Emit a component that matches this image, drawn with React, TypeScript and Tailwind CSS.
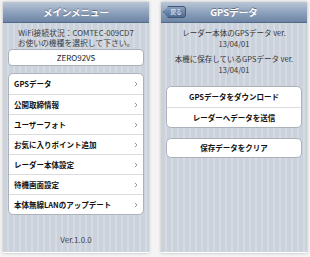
import React from 'react';

const stripes =
  'bg-[repeating-linear-gradient(90deg,#cbd2dc_0px,#cbd2dc_4px,#d5dbe3_4px,#d5dbe3_6px)]';

const menuItems = [
  'GPSデータ',
  '公開取締情報',
  'ユーザーフォト',
  'お気に入りポイント追加',
  'レーダー本体設定',
  '待機画面設定',
  '本体無線LANのアップデート',
];

const NavBar: React.FC<{ title: string; back?: boolean }> = ({ title, back }) => (
  <div className="relative h-[21px] shrink-0 flex items-center justify-center bg-gradient-to-b from-[#bac6d6] via-[#8fa3be] to-[#6d85a5] border-b border-[#53698a]">
    {back && (
      <div className="absolute left-[2px] top-[4px] h-[12px] w-[23px] flex items-center justify-center pl-[3px] text-[5.5px] text-white bg-gradient-to-b from-[#8ba0bd] to-[#4e6a93] border border-[#3f5677] rounded-[3px] [clip-path:polygon(5px_0,100%_0,100%_100%,5px_100%,0_50%)]">
        戻る
      </div>
    )}
    <span className="text-[9.5px] font-bold text-white [text-shadow:0_-1px_0_rgba(0,0,0,0.35)]">{title}</span>
  </div>
);

const Chevron = () => (
  <svg width="4" height="6" viewBox="0 0 4 6" className="shrink-0">
    <path d="M0.8 0.8 L3 3 L0.8 5.2" fill="none" stroke="#9a9a9a" strokeWidth="1" />
  </svg>
);

export default function App() {
  return (
    <div
      className="w-[310px] h-[257px] bg-[#f4f4f4] flex gap-[12px] pl-[3px] pt-[2px] overflow-hidden"
      style={{ fontFamily: '"Noto Sans CJK JP", "Noto Sans", sans-serif' }}
    >
      {/* Left screen */}
      <div className={`w-[146px] h-[251px] flex flex-col shadow-[0_0_3px_rgba(0,0,0,0.25)] border-b border-white ${stripes}`}>
        <NavBar title="メインメニュー" />
        <div className="flex-1 flex flex-col px-[5px]">
          <div className="pt-[5px] text-center text-[7.8px] leading-[10px] text-[#3d3d3d] whitespace-nowrap">
            <div>WiFi接続状況：COMTEC-009CD7</div>
            <div>お使いの機種を選択して下さい。</div>
          </div>
          <div className="mt-[1px] h-[17px] bg-white border border-[#aab0b8] rounded-[4px] flex items-center justify-center text-[8px] text-[#222]">
            ZERO92VS
          </div>
          <div className="mt-[7px] bg-white border border-[#acb2ba] rounded-[5px] overflow-hidden">
            {menuItems.map((item, i) => (
              <div
                key={item}
                className={`h-[20px] flex items-center justify-between pl-[5px] pr-[5px] ${i > 0 ? 'border-t border-[#dcdcdc]' : ''}`}
              >
                <span className="text-[7.5px] font-bold text-[#111]">{item}</span>
                <Chevron />
              </div>
            ))}
          </div>
          <div className="mt-auto pb-[6px] text-center text-[8px] text-[#444]">Ver.1.0.0</div>
        </div>
      </div>

      {/* Right screen */}
      <div className={`w-[146px] h-[251px] flex flex-col shadow-[0_0_3px_rgba(0,0,0,0.25)] border-b border-white ${stripes}`}>
        <NavBar title="GPSデータ" back />
        <div className="flex-1 flex flex-col px-[5px]">
          <div className="pt-[4px] text-center text-[7.5px] leading-[11px] text-[#333] whitespace-nowrap">
            <div>レーダー本体のGPSデータ ver.</div>
            <div>13/04/01</div>
            <div className="mt-[4px]">本機に保存しているGPSデータ ver.</div>
            <div>13/04/01</div>
          </div>
          <div className="mt-[11px] bg-white border border-[#acb2ba] rounded-[5px] overflow-hidden">
            <div className="h-[20px] flex items-center justify-center text-[7.5px] font-bold text-[#111]">GPSデータをダウンロード</div>
            <div className="h-[20px] flex items-center justify-center text-[7.5px] font-bold text-[#111] border-t border-[#dcdcdc]">レーダーへデータを送信</div>
          </div>
          <div className="mt-[10px] h-[20px] bg-white border border-[#acb2ba] rounded-[5px] flex items-center justify-center text-[7.5px] font-bold text-[#111]">
            保存データをクリア
          </div>
        </div>
      </div>
    </div>
  );
}
